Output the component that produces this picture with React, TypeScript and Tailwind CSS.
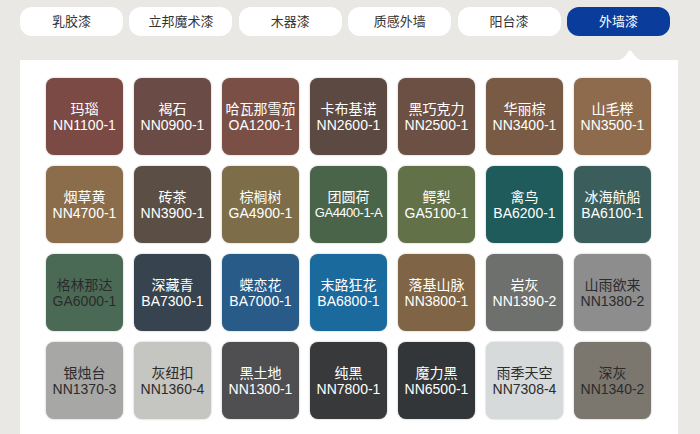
import React from 'react';

const tabs = ['乳胶漆', '立邦魔术漆', '木器漆', '质感外墙', '阳台漆', '外墙漆'];

type Swatch = { name: string; code: string; bg: string; dark?: boolean };

const swatches: Swatch[] = [
  { name: '玛瑙', code: 'NN1100-1', bg: '#7b4a45' },
  { name: '褐石', code: 'NN0900-1', bg: '#6b4b45' },
  { name: '哈瓦那雪茄', code: 'OA1200-1', bg: '#7a5046' },
  { name: '卡布基诺', code: 'NN2600-1', bg: '#5b4942' },
  { name: '黑巧克力', code: 'NN2500-1', bg: '#6c5044' },
  { name: '华丽棕', code: 'NN3400-1', bg: '#795a45' },
  { name: '山毛榉', code: 'NN3500-1', bg: '#8e6b4c' },

  { name: '烟草黄', code: 'NN4700-1', bg: '#8b6d4b' },
  { name: '砖茶', code: 'NN3900-1', bg: '#5b4f45' },
  { name: '棕榈树', code: 'GA4900-1', bg: '#7d6d49' },
  { name: '团圆荷', code: 'GA4400-1-A', bg: '#4a6449' },
  { name: '鳄梨', code: 'GA5100-1', bg: '#637149' },
  { name: '禽鸟', code: 'BA6200-1', bg: '#1f5b5b' },
  { name: '冰海航船', code: 'BA6100-1', bg: '#3b5e5c' },

  { name: '格林那达', code: 'GA6000-1', bg: '#4b6a56', dark: true },
  { name: '深藏青', code: 'BA7300-1', bg: '#37434f' },
  { name: '蝶恋花', code: 'BA7000-1', bg: '#295b89' },
  { name: '末路狂花', code: 'BA6800-1', bg: '#1b6a9d' },
  { name: '落基山脉', code: 'NN3800-1', bg: '#7f6445' },
  { name: '岩灰', code: 'NN1390-2', bg: '#6e706d' },
  { name: '山雨欲来', code: 'NN1380-2', bg: '#8d8d8e', dark: true },

  { name: '银烛台', code: 'NN1370-3', bg: '#a7a7a6', dark: true },
  { name: '灰纽扣', code: 'NN1360-4', bg: '#c5c5c1', dark: true },
  { name: '黑土地', code: 'NN1300-1', bg: '#4f4f51' },
  { name: '纯黑', code: 'NN7800-1', bg: '#38393b' },
  { name: '魔力黑', code: 'NN6500-1', bg: '#323638' },
  { name: '雨季天空', code: 'NN7308-4', bg: '#d6dadb', dark: true },
  { name: '深灰', code: 'NN1340-2', bg: '#7b776f', dark: true },
];

export default function App() {
  const active = 5;
  return (
    <div
      className="w-[700px] h-[434px] overflow-hidden bg-[#e9e8e5]"
      style={{ fontFamily: '"Liberation Sans", Arial, "Noto Sans CJK SC", sans-serif' }}
    >
      {/* tabs */}
      <div className="flex gap-[6.4px] pl-[20px] pt-[7px]">
        {tabs.map((t, i) => (
          <div
            key={t}
            className={`w-[103px] h-[29px] rounded-[12px] flex items-center justify-center text-[13px] ${
              i === active ? 'bg-[#0a3c9c] text-white' : 'bg-white text-[#333]'
            }`}
          >
            {t}
          </div>
        ))}
      </div>

      {/* panel */}
      <div className="relative ml-[20px] mt-[24px] w-[658px] h-[400px] bg-white pt-[18px] pl-[26px]">
        <svg className="absolute left-[593px] -top-[11px]" width="34" height="12" viewBox="0 0 34 12">
          <path d="M0 12 C8 12 12 8 15 3 C16 1 18 1 19 3 C22 8 26 12 34 12 Z" fill="#ffffff" />
        </svg>
        <div className="grid grid-cols-[repeat(7,77px)] gap-[11px]">
          {swatches.map(s => (
            <div
              key={s.code}
              className={`h-[77px] rounded-[8px] flex flex-col items-center justify-center text-[14px] leading-[16px] whitespace-nowrap shadow-[0_0_2px_rgba(0,0,0,0.3)] ${
                s.dark ? 'text-[#2b2b2b]' : 'text-white'
              }`}
              style={{ backgroundColor: s.bg }}
            >
              <div>{s.name}</div>
              <div className={s.code.length > 8 ? 'text-[13px] tracking-[-0.5px]' : ''}>{s.code}</div>
            </div>
          ))}
        </div>
      </div>
    </div>
  );
}
